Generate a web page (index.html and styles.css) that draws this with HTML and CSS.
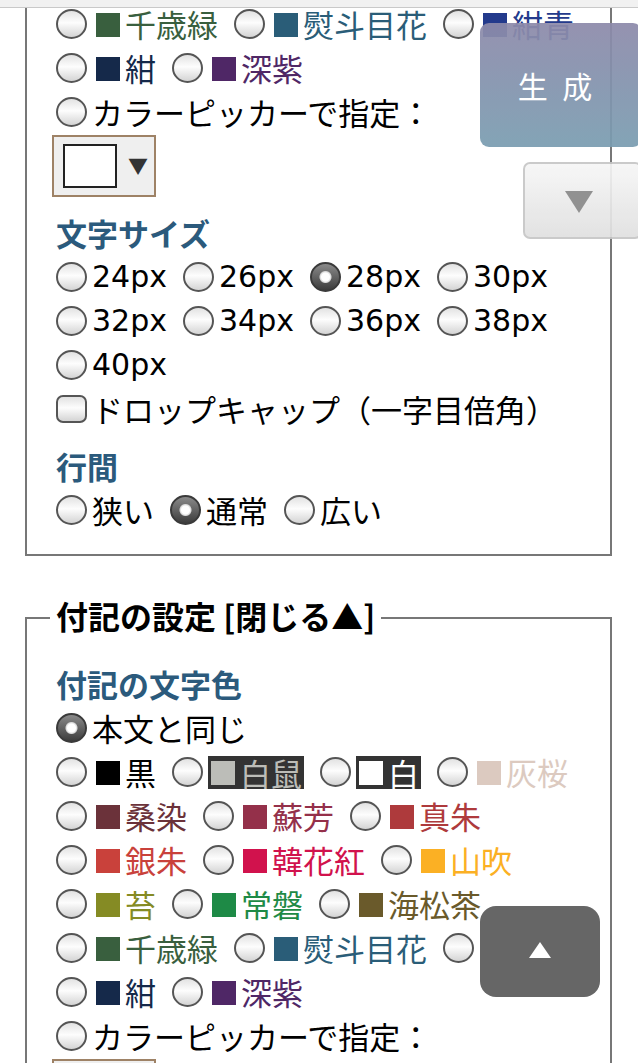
FILE: index.html
```html
<!DOCTYPE html>
<html lang="ja">
<head>
    <meta charset="UTF-8">
    <meta name="viewport" content="width=device-width, initial-scale=1.0">
    <title>設定</title>
    <link rel="stylesheet" href="styles.css">
</head>
<body>

    <div class="topbar"></div>

    <form class="settings">
        <fieldset class="box box_cut">
            <div class="opts">
                <label class="opt"><input type="radio" name="mainColor"><span class="name c_chitose"><span class="sw"></span>千歳緑</span></label>
                <label class="opt"><input type="radio" name="mainColor"><span class="name c_noshime"><span class="sw"></span>熨斗目花</span></label>
                <label class="opt"><input type="radio" name="mainColor"><span class="name c_konjo"><span class="sw"></span>紺青</span></label>
            </div>
            <div class="opts">
                <label class="opt"><input type="radio" name="mainColor"><span class="name c_kon"><span class="sw"></span>紺</span></label>
                <label class="opt"><input type="radio" name="mainColor"><span class="name c_koki"><span class="sw"></span>深紫</span></label>
            </div>
            <div class="opts">
                <label class="opt"><input type="radio" name="mainColor"><span>カラーピッカーで指定：</span></label>
            </div>
            <div class="picker_row">
                <div class="picker"><span class="picker_sw"></span><span class="picker_arrow">▼</span></div>
            </div>

            <h3 class="ttl">文字サイズ</h3>
            <div class="opts">
                <label class="opt"><input type="radio" name="size"><span class="px">24px</span></label>
                <label class="opt"><input type="radio" name="size"><span class="px">26px</span></label>
                <label class="opt"><input type="radio" name="size" checked><span class="px">28px</span></label>
                <label class="opt"><input type="radio" name="size"><span class="px">30px</span></label>
            </div>
            <div class="opts">
                <label class="opt"><input type="radio" name="size"><span class="px">32px</span></label>
                <label class="opt"><input type="radio" name="size"><span class="px">34px</span></label>
                <label class="opt"><input type="radio" name="size"><span class="px">36px</span></label>
                <label class="opt"><input type="radio" name="size"><span class="px">38px</span></label>
            </div>
            <div class="opts">
                <label class="opt"><input type="radio" name="size"><span class="px">40px</span></label>
            </div>
            <div class="opts">
                <label class="opt"><input type="checkbox" name="dropcap"><span>ドロップキャップ（一字目倍角）</span></label>
            </div>

            <h3 class="ttl">行間</h3>
            <div class="opts">
                <label class="opt"><input type="radio" name="lh"><span>狭い</span></label>
                <label class="opt"><input type="radio" name="lh" checked><span>通常</span></label>
                <label class="opt"><input type="radio" name="lh"><span>広い</span></label>
            </div>
        </fieldset>

        <fieldset class="box box_note">
            <legend class="legend">付記の設定 [閉じる▲]</legend>

            <h3 class="ttl">付記の文字色</h3>
            <div class="opts">
                <label class="opt"><input type="radio" name="noteColor" checked><span>本文と同じ</span></label>
            </div>
            <div class="opts">
                <label class="opt"><input type="radio" name="noteColor"><span class="name c_kuro"><span class="sw"></span>黒</span></label>
                <label class="opt"><input type="radio" name="noteColor"><span class="name dark c_shironezu"><span class="sw"></span>白鼠</span></label>
                <label class="opt"><input type="radio" name="noteColor"><span class="name dark c_shiro"><span class="sw"></span>白</span></label>
                <label class="opt"><input type="radio" name="noteColor"><span class="name c_haizakura"><span class="sw"></span>灰桜</span></label>
            </div>
            <div class="opts">
                <label class="opt"><input type="radio" name="noteColor"><span class="name c_kuwazome"><span class="sw"></span>桑染</span></label>
                <label class="opt"><input type="radio" name="noteColor"><span class="name c_suou"><span class="sw"></span>蘇芳</span></label>
                <label class="opt"><input type="radio" name="noteColor"><span class="name c_shinshu"><span class="sw"></span>真朱</span></label>
            </div>
            <div class="opts">
                <label class="opt"><input type="radio" name="noteColor"><span class="name c_ginshu"><span class="sw"></span>銀朱</span></label>
                <label class="opt"><input type="radio" name="noteColor"><span class="name c_karakurenai"><span class="sw"></span>韓花紅</span></label>
                <label class="opt"><input type="radio" name="noteColor"><span class="name c_yamabuki"><span class="sw"></span>山吹</span></label>
            </div>
            <div class="opts">
                <label class="opt"><input type="radio" name="noteColor"><span class="name c_koke"><span class="sw"></span>苔</span></label>
                <label class="opt"><input type="radio" name="noteColor"><span class="name c_tokiwa"><span class="sw"></span>常磐</span></label>
                <label class="opt"><input type="radio" name="noteColor"><span class="name c_miru"><span class="sw"></span>海松茶</span></label>
            </div>
            <div class="opts">
                <label class="opt"><input type="radio" name="noteColor"><span class="name c_chitose"><span class="sw"></span>千歳緑</span></label>
                <label class="opt"><input type="radio" name="noteColor"><span class="name c_noshime"><span class="sw"></span>熨斗目花</span></label>
                <label class="opt"><input type="radio" name="noteColor"><span class="name c_konjo"><span class="sw"></span>紺青</span></label>
            </div>
            <div class="opts">
                <label class="opt"><input type="radio" name="noteColor"><span class="name c_kon"><span class="sw"></span>紺</span></label>
                <label class="opt"><input type="radio" name="noteColor"><span class="name c_koki"><span class="sw"></span>深紫</span></label>
            </div>
            <div class="opts">
                <label class="opt"><input type="radio" name="noteColor"><span>カラーピッカーで指定：</span></label>
            </div>
            <div class="picker_row">
                <div class="picker"><span class="picker_sw"></span><span class="picker_arrow">▼</span></div>
            </div>
        </fieldset>
    </form>

    <!-- floating buttons -->
    <button class="gen_btn" type="button">生 成</button>
    <button class="down_btn" type="button">
        <svg width="30" height="24" viewBox="0 0 30 24"><polygon points="1,1 29,1 15,23" fill="#888"/></svg>
    </button>
    <button class="top_btn" type="button">
        <svg width="24" height="18" viewBox="0 0 24 18"><polygon points="12,1 23,17 1,17" fill="#fff"/></svg>
    </button>

</body>
</html>
```

FILE: styles.css
```css
body{
    margin: 0;
    padding: 0;
    font-family: "Noto Sans CJK JP", "Noto Sans", sans-serif;
    font-size: 31px;
    line-height: 44px;
    color: #000;
    background-color: #fff;
}

.topbar{
    position: fixed;
    top: 0;
    left: 0;
    right: 0;
    height: 7px;
    background-color: #f1f1f1;
    border-bottom: 1px solid #c9c9c9;
    z-index: 5;
}

.settings{
    margin: 0;
}

.box{
    margin: 0 26px 0 25px;
    padding: 0 18px 22px 29px;
    border: 2px solid #777;
    min-width: 0;
}

.box_cut{
    border-top: 0;
    padding-top: 2px;
}

.box_note{
    margin-top: 44px;
    padding-top: 13px;
}

.legend{
    font-size: 32px;
    font-weight: bold;
    line-height: 36px;
    padding: 0 6px;
    margin-left: -6px;
    position: relative;
    top: -3px;
}

.ttl{
    margin: 13px 0 0 0;
    font-size: 31px;
    line-height: 44px;
    font-weight: bold;
    color: #2b5a7c;
}

.opts{
    display: flex;
    column-gap: 16px;
}

.opt{
    display: flex;
    align-items: center;
    height: 44px;
    white-space: nowrap;
}

.px{
    font-family: "DejaVu Sans", sans-serif;
    font-size: 30px;
}

.name{
    display: inline-flex;
    align-items: center;
}

/* colour chip in front of the name */
.sw{
    flex: none;
    width: 24px;
    height: 24px;
    margin: 1px 5px 0 4px;
    background-color: currentColor;
}

input[type="radio"],
input[type="checkbox"]{
    appearance: none;
    -webkit-appearance: none;
    flex: none;
    box-sizing: border-box;
    width: 31px;
    height: 30px;
    margin: 0 5px 0 0;
    border: 2px solid #555;
    border-radius: 50%;
    background: linear-gradient(#e2e2e2, #fdfdfd 45%, #d4d4d4);
}

input[type="checkbox"]{
    height: 28px;
    border-radius: 7px;
}

input[type="radio"]:checked{
    border-color: #3a3a3a;
    background:
        radial-gradient(circle, #fff 0 4px, #d8d8d8 5.5px, transparent 6.5px),
        linear-gradient(#8a8a8a, #3c3c3c);
}

.dark{
    height: 33px;
    line-height: 33px;
    padding-right: 2px;
    background-color: #333;
}

.dark .sw{
    margin-left: 3px;
}

.picker_row{
    height: 63px;
    padding-top: 1px;
}

.picker{
    display: flex;
    align-items: center;
    box-sizing: border-box;
    width: 104px;
    height: 62px;
    margin-left: -4px;
    padding-left: 9px;
    border: 2px solid #9e8266;
    background-color: #efefef;
}

.picker_sw{
    box-sizing: border-box;
    width: 54px;
    height: 44px;
    border: 2px solid #222;
    background-color: #fff;
}

.picker_arrow{
    margin-left: 11px;
    font-size: 20px;
    color: #333;
}

/* color names */
.c_kuro{ color: #000; }
.c_shironezu{ color: #bcbdb8; }
.c_shiro{ color: #fff; }
.c_haizakura{ color: #dccac0; }
.c_kuwazome{ color: #6b323a; }
.c_suou{ color: #94304a; }
.c_shinshu{ color: #ae3a3c; }
.c_ginshu{ color: #c9413b; }
.c_karakurenai{ color: #d1124d; }
.c_yamabuki{ color: #fbb024; }
.c_koke{ color: #858b24; }
.c_tokiwa{ color: #1e8a46; }
.c_miru{ color: #6a5a2b; }
.c_chitose{ color: #395f3e; }
.c_noshime{ color: #2a5d78; }
.c_konjo{ color: #233a8c; }
.c_kon{ color: #15294a; }
.c_koki{ color: #4f2766; }

/* floating buttons */
.gen_btn{
    position: fixed;
    top: 23px;
    right: -4px;
    width: 162px;
    height: 124px;
    border: 0;
    border-radius: 9px;
    background: linear-gradient(#8d8aab, #7a9db1);
    opacity: 0.93;
    color: #fff;
    font-family: "Noto Sans CJK JP", sans-serif;
    font-size: 30px;
    letter-spacing: 4px;
    padding: 0 8px 0 0;
}

.down_btn{
    position: fixed;
    top: 162px;
    right: -4px;
    width: 119px;
    height: 77px;
    box-sizing: border-box;
    border: 2px solid #c6c6c6;
    border-radius: 7px;
    background: linear-gradient(#f6f6f6, #e0e0e0);
    opacity: 0.92;
    padding: 6px 8px 0 0;
}

.top_btn{
    position: fixed;
    top: 906px;
    left: 480px;
    width: 120px;
    height: 91px;
    border: 0;
    border-radius: 16px;
    background-color: #666;
    padding: 0;
}
```
